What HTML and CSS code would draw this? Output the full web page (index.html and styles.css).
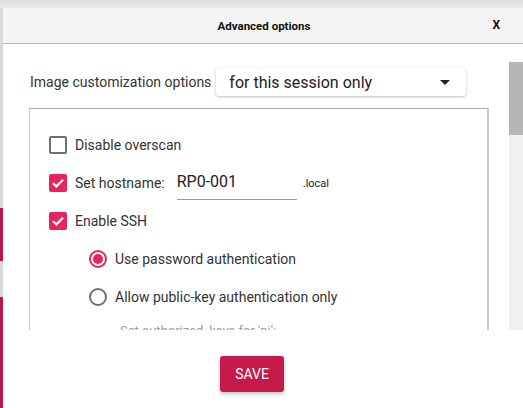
FILE: index.html
```html
<!DOCTYPE html>
<html lang="en">
<head>
    <meta charset="UTF-8">
    <title>Advanced options</title>
    <link rel="stylesheet" href="styles.css">
</head>
<body>
    <div class="backdrop-top"></div>
    <div class="page">
        <!-- app behind the dialog -->
        <div class="side-strip">
            <div class="strip gray" style="height: 200px;"></div>
            <div class="strip red" style="height: 53px;"></div>
            <div class="strip gray" style="height: 36px;"></div>
            <div class="strip red" style="flex: 1;"></div>
        </div>

        <div class="dialog">
            <div class="dialog-header">
                <span class="dialog-title">Advanced options</span>
                <span class="dialog-close">X</span>
            </div>

            <div class="dialog-body">
                <div class="scroll-area">
                    <div class="scroll-content">
                        <div class="combo-row">
                            <span class="combo-label">Image customization options</span>
                            <div class="combo">
                                <span>for this session only</span>
                                <span class="caret"></span>
                            </div>
                        </div>

                        <div class="group-box">
                            <div class="option-row">
                                <span class="checkbox"></span>
                                <span class="option-label">Disable overscan</span>
                            </div>
                            <div class="option-row">
                                <span class="checkbox checked">
                                    <svg viewBox="0 0 18 18" width="18" height="18"><path d="M4 9.2 L7.4 12.4 L14 5.8" fill="none" stroke="#fff" stroke-width="2.2"/></svg>
                                </span>
                                <span class="option-label">Set hostname:</span>
                                <span class="text-field">RP0-001</span>
                                <span class="suffix">.local</span>
                            </div>
                            <div class="option-row">
                                <span class="checkbox checked">
                                    <svg viewBox="0 0 18 18" width="18" height="18"><path d="M4 9.2 L7.4 12.4 L14 5.8" fill="none" stroke="#fff" stroke-width="2.2"/></svg>
                                </span>
                                <span class="option-label">Enable SSH</span>
                            </div>
                            <div class="option-row indent">
                                <span class="radio checked"></span>
                                <span class="option-label">Use password authentication</span>
                            </div>
                            <div class="option-row indent">
                                <span class="radio"></span>
                                <span class="option-label">Allow public-key authentication only</span>
                            </div>
                            <div class="option-row indent faded">
                                <span class="option-label small">Set authorized_keys for 'pi':</span>
                            </div>
                        </div>
                    </div>
                    <div class="scrollbar">
                        <div class="scroll-thumb"></div>
                    </div>
                </div>

                <div class="dialog-footer">
                    <button class="save-button">SAVE</button>
                </div>
            </div>
        </div>
    </div>
</body>
</html>
```

FILE: styles.css
```css
/* Page behind the dialog */
html, body {
    margin: 0;
    padding: 0;
    height: 100%;
}

body {
    font-family: Roboto, "Liberation Sans", sans-serif;
    background-color: #e6e6e6;
    display: flex;
    flex-direction: column;
    overflow: hidden;
    color: #333;
}

.backdrop-top {
    height: 8px;
    background: linear-gradient(#dedede, #ebebeb);
    flex-shrink: 0;
}

.page {
    flex: 1;
    display: flex;
    min-height: 0;
}

.side-strip {
    width: 3px;
    display: flex;
    flex-direction: column;
    flex-shrink: 0;
}

.strip.gray {
    background-color: #d8d8d8;
}

.strip.red {
    background-color: #b8174b;
}

/* Dialog */
.dialog {
    flex: 1;
    background-color: #fff;
    display: flex;
    flex-direction: column;
}

.dialog-header {
    height: 35px;
    background-color: #f4f4f4;
    border-bottom: 1px solid #b4b4b4;
    display: flex;
    align-items: center;
    justify-content: center;
    position: relative;
    flex-shrink: 0;
}

.dialog-title {
    font-size: 11.5px;
    font-weight: bold;
    color: #111;
    margin-left: 2px;
}

.dialog-close {
    position: absolute;
    right: 23px;
    top: 10px;
    font-size: 12px;
    font-weight: bold;
    color: #111;
}

.dialog-body {
    flex: 1;
    display: flex;
    flex-direction: column;
    padding-top: 18px;
}

/* Scrollable options area */
.scroll-area {
    height: 268px;
    display: flex;
    overflow: hidden;
}

.scroll-content {
    flex: 1;
    padding: 6px 20px 0 26px;
}

.scrollbar {
    width: 14px;
    background-color: #f0f0f0;
}

.scroll-thumb {
    height: 73px;
    background-color: #b5b5b5;
}

.combo-row {
    display: flex;
    align-items: center;
    gap: 5px;
}

.combo-label {
    font-size: 14px;
    color: #333;
    margin-left: 1px;
}

.combo {
    width: 250px;
    height: 28px;
    box-sizing: border-box;
    padding: 0 13px;
    display: flex;
    align-items: center;
    justify-content: space-between;
    font-size: 16px;
    color: #222;
    border-radius: 3px;
    box-shadow: 0 1px 3px rgba(0, 0, 0, 0.25);
}

.caret {
    width: 0;
    height: 0;
    border-left: 5px solid transparent;
    border-right: 5px solid transparent;
    border-top: 5px solid #222;
    margin-right: 3px;
}

.group-box {
    margin-top: 12px;
    border: 1px solid #a8a8a8;
    border-left-color: #c8c8c8;
    border-right: 2px solid #cbcbcb;
    padding: 17px 19px 0;
    height: 260px;
}

.option-row {
    display: flex;
    align-items: center;
    height: 38px;
    font-size: 14px;
}

.option-row.indent {
    padding-left: 40px;
}

.option-row.faded {
    height: 22px;
    align-items: flex-end;
}

.option-label {
    margin-left: 8px;
    color: #333;
}

.option-label.small {
    font-size: 13px;
    color: #a0a0a0;
    margin-left: 31px;
}

.checkbox {
    width: 18px;
    height: 18px;
    box-sizing: border-box;
    border: 2px solid #707070;
    border-radius: 2px;
    display: flex;
}

.checkbox.checked {
    border: none;
    background-color: #e8245f;
}

.radio {
    width: 18px;
    height: 18px;
    box-sizing: border-box;
    border: 2px solid #707070;
    border-radius: 50%;
    display: flex;
    align-items: center;
    justify-content: center;
}

.radio.checked {
    border-color: #e8245f;
}

.radio.checked::after {
    content: "";
    width: 10px;
    height: 10px;
    border-radius: 50%;
    background-color: #e8245f;
}

.text-field {
    width: 120px;
    margin-left: 12px;
    font-size: 16px;
    color: #222;
    padding-bottom: 8px;
    margin-top: 6px;
    border-bottom: 1px solid #9a9a9a;
}

.suffix {
    font-size: 11px;
    margin-left: 6px;
    color: #222;
}

/* Footer */
.dialog-footer {
    flex: 1;
    display: flex;
    justify-content: center;
    align-items: flex-start;
    padding-top: 26px;
    padding-right: 22px;
}

.save-button {
    width: 64px;
    height: 36px;
    border: none;
    border-radius: 3px;
    background-color: #c51a4a;
    color: #fff;
    font-family: Roboto, "Liberation Sans", sans-serif;
    font-size: 14px;
    box-shadow: 0 2px 4px rgba(0, 0, 0, 0.25);
}
```
